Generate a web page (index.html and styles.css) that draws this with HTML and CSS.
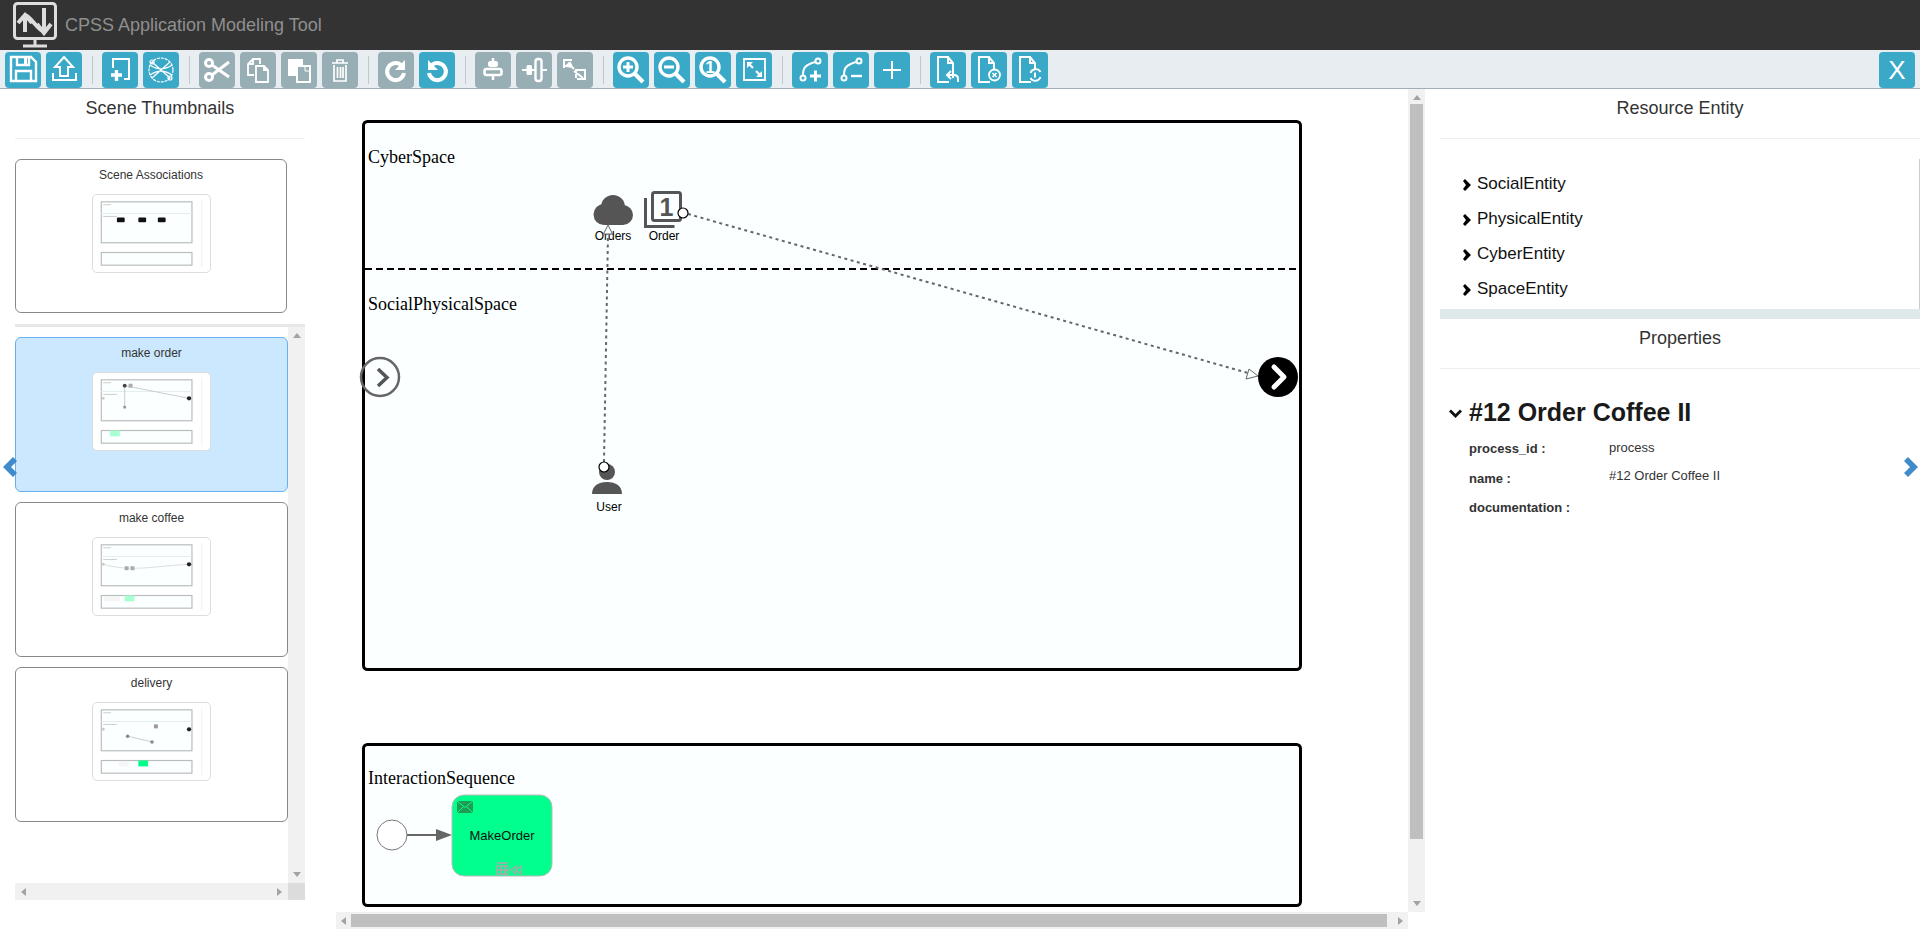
FILE: index.html
```html
<!DOCTYPE html>
<html lang="en">
<head>
  <meta charset="UTF-8">
  <title>CPSS Application Modeling Tool</title>
  <link rel="stylesheet" href="styles.css">
</head>
<body>
  <svg class="defs" width="0" height="0">
    <symbol id="page" viewBox="0 0 36 36">
      <path d="M23 26V11l-5-6H8v25h11M18 5v6h5" fill="none" stroke="#fff" stroke-width="2"/>
    </symbol>
    <symbol id="mini" viewBox="0 0 119 79">
      <rect x="8" y="7" width="93" height="42" fill="#fbffff" stroke="#b8bcbc" stroke-width="1.200"/>
      <line x1="8" y1="19" x2="101" y2="19" stroke="#e4eeee"/>
      <rect x="8" y="59" width="93" height="13" fill="#fbffff" stroke="#b8bcbc" stroke-width="1.200"/>
      <line x1="111" y1="5" x2="111" y2="74" stroke="#f2f2f2"/>
      <line x1="10" y1="10" x2="18" y2="10" stroke="#ccc"/>
      <line x1="10" y1="22" x2="24" y2="22" stroke="#ccc"/>
    </symbol>
  </svg>

  <header class="topbar">
    <svg class="logo" width="46" height="46" viewBox="0 0 46 46">
      <rect x="1.500" y="1.500" width="41" height="35" rx="3" fill="none" stroke="#ddd" stroke-width="3"/>
      <path d="M22 36v8M10 44h24" fill="none" stroke="#ddd" stroke-width="3"/>
      <path d="M12 30V13M5 21l7-8 7 8M12 13c6 2 12 14 19 17M31 30V6M24 22l7 9 7-9" fill="none" stroke="#ddd" stroke-width="4"/>
    </svg>
    <span class="app-title">CPSS Application Modeling Tool</span>
  </header>

  <nav class="toolbar">
    <button class="tool"><svg viewBox="0 0 36 36"><path d="M6 5h20l5 5v19H6zM12 5v8h12V5M11 29V19h15v10" fill="none" stroke="#fff" stroke-width="2.400"/><rect x="19" y="6" width="3" height="6" fill="#fff"/></svg></button>
    <button class="tool"><svg viewBox="0 0 36 36"><path d="M18 5l9 10h-5v9h-8v-9H9zM7 21v7h23v-7" fill="none" stroke="#fff" stroke-width="2"/></svg></button>
    <i class="sep"></i>
    <button class="tool"><svg viewBox="0 0 36 36"><path d="M11 16V7h16v20h-5" fill="none" stroke="#fff" stroke-width="2"/><path d="M9 23h11M14.500 18v11" stroke="#fff" stroke-width="3.400"/></svg></button>
    <button class="tool"><svg viewBox="0 0 36 36"><g fill="none" stroke="#fff" stroke-width="1.200"><circle cx="18" cy="18" r="12" stroke-dasharray="3 1"/><path d="M7 13c7 5 15 5 22 0M7 23c7-5 15-5 22 0M9 10l18 16M27 10L9 26"/><circle cx="9" cy="10" r="2"/><circle cx="27" cy="26" r="2"/></g></svg></button>
    <i class="sep"></i>
    <button class="tool off"><svg viewBox="0 0 36 36"><g fill="none" stroke="#fff" stroke-width="3"><circle cx="10" cy="11" r="3.500"/><circle cx="10" cy="25" r="3.500"/><path d="M13 13l17 12M13 23l17-13"/></g></svg></button>
    <button class="tool off"><svg viewBox="0 0 36 36"><path d="M14 23H8V12l5-5h7v5M13 7v5H8M16 14h8l4 4v12H16zM24 14v4h4" fill="none" stroke="#fff" stroke-width="1.800"/></svg></button>
    <button class="tool off"><svg viewBox="0 0 36 36"><path d="M7 7h15v17H7z" fill="#fff"/><rect x="16" y="14" width="13" height="16" fill="#98aeb5" stroke="#fff" stroke-width="2"/><path d="M24 15v4h4" fill="none" stroke="#fff"/></svg></button>
    <button class="tool off"><svg viewBox="0 0 36 36"><path d="M10 11h16M15 11V8h6v3M12 13v16h12V13M15.500 15v11M18.500 15v11M21 15v11" fill="none" stroke="#fff" stroke-width="1.700"/></svg></button>
    <i class="sep"></i>
    <button class="tool off"><svg viewBox="0 0 36 36"><path d="M26 21a8.500 8.500 0 1 1-3-8" fill="none" stroke="#fff" stroke-width="4"/><path d="M27 8v10H17z" fill="#fff"/></svg></button>
    <button class="tool"><svg viewBox="0 0 36 36"><path d="M10 21a8.500 8.500 0 1 0 3-8" fill="none" stroke="#fff" stroke-width="4"/><path d="M9 8v10h10z" fill="#fff"/></svg></button>
    <i class="sep"></i>
    <button class="tool off"><svg viewBox="0 0 36 36"><path d="M18 6v5M18 23v5" stroke="#fff" stroke-width="2.500"/><rect x="13.500" y="9.500" width="9" height="5" rx="1.500" fill="#fff" stroke="#fff"/><rect x="9.500" y="17" width="17" height="6" rx="2" fill="none" stroke="#fff" stroke-width="2.600"/></svg></button>
    <button class="tool off"><svg viewBox="0 0 36 36"><path d="M6 18h5M16 18h3M26 18h5" stroke="#fff" stroke-width="2"/><rect x="10.500" y="13" width="5.500" height="10" rx="1.500" fill="#fff"/><rect x="19.500" y="7" width="6" height="22" rx="2.500" fill="none" stroke="#fff" stroke-width="2.400"/></svg></button>
    <button class="tool off"><svg viewBox="0 0 36 36"><path d="M15 8H7v8M19 26v-8h9v9h-8M13 11l2 4-6-1zM17 19l9 7M11 11l6 6" fill="none" stroke="#fff" stroke-width="2"/></svg></button>
    <i class="sep"></i>
    <button class="tool"><svg viewBox="0 0 36 36"><circle cx="15" cy="15" r="9" fill="none" stroke="#fff" stroke-width="3.400"/><path d="M22 22l8 8" stroke="#fff" stroke-width="4.200"/><path d="M10 15h10M15 10v10" stroke="#fff" stroke-width="3"/></svg></button>
    <button class="tool"><svg viewBox="0 0 36 36"><circle cx="15" cy="15" r="9" fill="none" stroke="#fff" stroke-width="3.400"/><path d="M22 22l8 8" stroke="#fff" stroke-width="4.200"/><path d="M10 15h10" stroke="#fff" stroke-width="3"/></svg></button>
    <button class="tool"><svg viewBox="0 0 36 36"><circle cx="15" cy="15" r="9" fill="none" stroke="#fff" stroke-width="3.400"/><path d="M22 22l8 8" stroke="#fff" stroke-width="4.200"/><text class="tool-digit" x="15" y="21">1</text></svg></button>
    <button class="tool"><svg viewBox="0 0 36 36"><path d="M8 7h21v21H8z" fill="none" stroke="#fff" stroke-width="1.800"/><path d="M12 11l5 5M25 24l-5-5" stroke="#fff" stroke-width="2.200"/><path d="M11 10h6l-6 6zM26 25h-6l6-6z" fill="#fff"/></svg></button>
    <i class="sep"></i>
    <button class="tool"><svg viewBox="0 0 36 36"><g fill="none" stroke="#fff" stroke-width="2"><circle cx="11" cy="26" r="2.500"/><circle cx="26" cy="9" r="2.500"/><path d="M11 23c0-7 2-10 12-13"/></g><path d="M18 24h11M23.500 18.500v11" stroke="#fff" stroke-width="3"/></svg></button>
    <button class="tool"><svg viewBox="0 0 36 36"><g fill="none" stroke="#fff" stroke-width="2"><circle cx="11" cy="26" r="2.500"/><circle cx="26" cy="9" r="2.500"/><path d="M11 23c0-7 2-10 12-13"/></g><path d="M18 24h11" stroke="#fff" stroke-width="2.400"/></svg></button>
    <button class="tool"><svg viewBox="0 0 36 36"><path d="M9 18h18M18 9v18" stroke="#fff" stroke-width="2"/></svg></button>
    <i class="sep"></i>
    <button class="tool"><svg viewBox="0 0 36 36"><use href="#page"/><path d="M28 30v-3c0-3-2-4-4-4h-6M21 19l-4 4 4 4" fill="none" stroke="#fff" stroke-width="2"/></svg></button>
    <button class="tool"><svg viewBox="0 0 36 36"><use href="#page"/><circle cx="23.500" cy="23" r="5.500" fill="#3aa9c8" stroke="#fff" stroke-width="1.800"/><path d="M21.500 21l4 4M25.500 21l-4 4" stroke="#fff" stroke-width="1.600"/></svg></button>
    <button class="tool"><svg viewBox="0 0 36 36"><use href="#page"/><path d="M18.500 21a5.500 5.500 0 0 1 10-1M28.500 25a5.500 5.500 0 0 1-10 1" fill="#3aa9c8" stroke="#fff" stroke-width="1.800"/></svg></button>
    <button class="tool close">X</button>
  </nav>

  <main class="workspace">
    <aside class="scenes">
      <h2 class="panel-title">Scene Thumbnails</h2>
      <div class="pinned">
        <article class="card pinned-card">
          <h3>Scene Associations</h3>
          <svg class="thumb" viewBox="0 0 119 79"><use href="#mini"/><g class="mini-art" fill="#111"><rect x="24" y="23" width="8" height="5" rx="1"/><rect x="46" y="23" width="8" height="5" rx="1"/><rect x="66" y="23" width="8" height="5" rx="1"/></g></svg>
        </article>
      </div>
      <div class="scene-scroll">
        <div class="scene-list">
          <article class="card active">
            <h3>make order</h3>
            <svg class="thumb" viewBox="0 0 119 79"><use href="#mini"/><g class="mini-art"><path d="M32 13l66 13M32 13v22" stroke="#ccc" fill="none"/><circle cx="32" cy="13" r="2" fill="#444"/><rect x="36" y="11" width="4" height="4" fill="#aaa"/><circle cx="98" cy="26" r="2.200" fill="#222"/><circle cx="32" cy="35" r="1.600" fill="#999"/><circle cx="10" cy="26" r="1.500" fill="#ccc"/><rect x="17" y="59" width="10" height="6" fill="#a8ffcf"/></g></svg>
          </article>
          <article class="card">
            <h3>make coffee</h3>
            <svg class="thumb" viewBox="0 0 119 79"><use href="#mini"/><g class="mini-art"><path d="M10 27c30 8 50 2 88 0" stroke="#ddd" fill="none"/><rect x="32" y="29" width="4" height="4" fill="#aaa"/><rect x="38" y="29" width="4" height="4" fill="#aaa"/><circle cx="98" cy="27" r="2.200" fill="#222"/><circle cx="10" cy="27" r="1.500" fill="#ccc"/><rect x="32" y="59" width="10" height="6" fill="#a8ffcf"/><rect x="11" y="60" width="16" height="5" fill="#f5f5f5"/></g></svg>
          </article>
          <article class="card">
            <h3>delivery</h3>
            <svg class="thumb" viewBox="0 0 119 79"><use href="#mini"/><g class="mini-art"><path d="M35 34l25 6" stroke="#ccc"/><rect x="62" y="22" width="4" height="4" fill="#999"/><circle cx="35" cy="34" r="1.800" fill="#888"/><circle cx="60" cy="40" r="1.800" fill="#888"/><circle cx="98" cy="27" r="2.200" fill="#222"/><circle cx="10" cy="27" r="1.500" fill="#ccc"/><rect x="46" y="59" width="10" height="6" fill="#00ff88"/><rect x="26" y="60" width="10" height="5" fill="#f5f5f5"/></g></svg>
          </article>
        </div>
        <div class="vbar"><span class="tri up"></span><span class="tri down"></span></div>
        <div class="hbar"><span class="tri left"></span><span class="tri right"></span></div>
        <div class="bar-corner"></div>
      </div>
    </aside>

    <section class="canvas-wrap">
      <svg class="canvas" viewBox="336 89 1072 823" width="1072" height="823">
        <rect x="363.500" y="121.500" width="937" height="548" rx="4" class="pool"/>
        <line x1="365" y1="269" x2="1299" y2="269" class="divider"/>
        <text class="lane-label" x="368" y="163">CyberSpace</text>
        <text class="lane-label" x="368" y="310">SocialPhysicalSpace</text>

        <!-- cloud -->
        <g class="shape">
          <circle cx="604" cy="214.500" r="10.500"/>
          <circle cx="623" cy="215" r="10"/>
          <circle cx="613" cy="207" r="12"/>
          <rect x="604" y="210" width="19" height="15"/>
        </g>
        <text class="node-label" x="613" y="240">Orders</text>

        <!-- order collection -->
        <path d="M645.500 198v28.500h29" class="outline"/>
        <rect x="652.500" y="192.500" width="28" height="28" rx="2" class="outline"/>
        <text class="order-digit" x="666.500" y="216">1</text>
        <text class="node-label" x="664" y="240">Order</text>

        <!-- user -->
        <circle cx="607" cy="472" r="8" class="shape"/>
        <path d="M592 494c0-8 6-12 15-12s15 4 15 12z" class="shape"/>
        <text class="node-label" x="609" y="511">User</text>

        <!-- associations -->
        <path d="M604 462L608 234" class="dotted"/>
        <path d="M608 225l-4.500 9h9z" class="arrow-open"/>
        <circle cx="604" cy="467" r="5" class="port"/>
        <path d="M688 214L1248 373" class="dotted"/>
        <path d="M1258 376l-9-7-3 10z" class="arrow-open"/>
        <circle cx="683" cy="213" r="5" class="port"/>

        <!-- start and end events -->
        <circle cx="380" cy="377" r="19" class="start-scene"/>
        <path d="M378 369l9 8.500-9 8.500" class="start-chevron"/>
        <circle cx="1278" cy="377" r="20" fill="#000"/>
        <path d="M1274 367l10 10-10 10" class="end-chevron"/>

        <rect x="363.500" y="744.500" width="937" height="161" rx="4" class="pool"/>
        <text class="lane-label" x="368" y="784">InteractionSequence</text>
        <circle cx="392" cy="835" r="15" class="seq-start"/>
        <line x1="407" y1="835" x2="438" y2="835" class="flow"/>
        <path d="M452 835l-16 6v-12z" fill="#666"/>
        <rect x="452" y="795" width="100" height="81" rx="12" class="task"/>
        <rect x="457" y="801" width="16" height="12" fill="#1f9d55"/>
        <path d="M457 801l8 6.500 8-6.500M457 813l6-6M473 813l-6-6" fill="none" stroke="#00ff8c" stroke-width="1"/>
        <text class="task-label" x="502" y="840">MakeOrder</text>
        <path d="M497 863h11M497 866h11v8h-11zM501 866v8M505 866v8M497 870h11" fill="none" stroke="#aaa" stroke-width="1.500"/>
        <path d="M516 866l-5 4 5 4zM521 866l-5 4 5 4z" fill="none" stroke="#aaa" stroke-width="1.200"/>
      </svg>
      <div class="vbar big"><span class="tri up"></span><span class="thumb-v"></span><span class="tri down"></span></div>
      <div class="hbar big"><span class="tri left"></span><span class="thumb-h"></span><span class="tri right"></span></div>
    </section>

    <aside class="details">
      <h2 class="panel-title">Resource Entity</h2>
      <div class="tree">
        <ul class="tree-list">
          <li><svg class="chev" viewBox="0 0 8 12"><path d="M0 2l2-2 6 6-6 6-2-2 3-4z"/></svg>SocialEntity</li>
          <li><svg class="chev" viewBox="0 0 8 12"><path d="M0 2l2-2 6 6-6 6-2-2 3-4z"/></svg>PhysicalEntity</li>
          <li><svg class="chev" viewBox="0 0 8 12"><path d="M0 2l2-2 6 6-6 6-2-2 3-4z"/></svg>CyberEntity</li>
          <li><svg class="chev" viewBox="0 0 8 12"><path d="M0 2l2-2 6 6-6 6-2-2 3-4z"/></svg>SpaceEntity</li>
        </ul>
      </div>
      <div class="band"></div>
      <h2 class="panel-title">Properties</h2>
      <div class="props">
        <h1 class="process-name"><svg class="chev-down" viewBox="0 0 13 9"><path d="M0 2.500l2-2 4.500 4.500L11 .5l2 2L6.500 9z"/></svg>#12 Order Coffee II</h1>
        <div class="prop-cols">
          <div class="prop-labels">
            <div>process_id :</div>
            <div>name :</div>
            <div>documentation :</div>
          </div>
          <div class="prop-values">
            <div>process</div>
            <div>#12 Order Coffee II</div>
          </div>
        </div>
      </div>
    </aside>

    <svg class="collapse collapse-left" viewBox="0 0 14 20"><path d="M14 4l-4-4L0 10l10 10 4-4-6-6z"/></svg>
    <svg class="collapse collapse-right" viewBox="0 0 14 20"><path d="M0 4l4-4 10 10-10 10-4-4 6-6z"/></svg>
  </main>
</body>
</html>
```

FILE: styles.css
```css
* {
  box-sizing: border-box;
}
html, body {
  margin: 0;
  height: 929px;
  overflow: hidden;
}
body {
  font-family: "Liberation Sans", Arial, sans-serif;
  color: #333;
  background: #fff;
}
.defs {
  display: block;
  height: 0;
}
.topbar {
  display: flex;
  align-items: center;
  height: 50px;
  padding-left: 13px;
  background: #333;
}
.logo {
  flex: none;
  width: 46px;
  height: 46px;
}
.app-title {
  margin-left: 6px;
  font-size: 18px;
  color: #8f8f8f;
}
.toolbar {
  display: flex;
  align-items: flex-end;
  gap: 5px;
  height: 39px;
  padding: 0 5px;
  background: #e8edf1;
  border-bottom: 1px solid #a4abba;
}
.tool {
  flex: none;
  width: 36px;
  height: 36px;
  padding: 0;
  border: none;
  border-radius: 4px;
  background: #3aa9c8;
}
.tool svg {
  display: block;
  width: 36px;
  height: 36px;
}
.tool.off {
  background: #98aeb5;
}
.tool-digit {
  font-size: 17px;
  font-weight: bold;
  fill: #fff;
  text-anchor: middle;
}
.close {
  margin-left: auto;
  color: #fff;
  font-family: "Liberation Sans", Arial, sans-serif;
  font-size: 26px;
  line-height: 36px;
}
.sep {
  flex: none;
  width: 1px;
  height: 28px;
  margin: 0 4px 4px 5px;
  background: #c2c8cc;
}
.workspace {
  position: relative;
  display: flex;
  height: 840px;
}
.panel-title {
  margin: 0;
  height: 50px;
  padding-top: 9px;
  font-size: 18px;
  font-weight: normal;
  line-height: 20px;
  text-align: center;
  border-bottom: 1px solid #eee;
}

/* left column */
.scenes {
  flex: none;
  width: 290px;
  margin-left: 15px;
}
.pinned {
  padding-top: 20px;
  height: 188px;
  border-bottom: 3px solid #e8e8e8;
}
.card {
  height: 155px;
  padding-top: 7px;
  border: 1px solid #888;
  border-radius: 6px;
  background: #fff;
  text-align: center;
}
.card h3 {
  margin: 0 0 11px;
  font-size: 12px;
  font-weight: normal;
  line-height: 16px;
}
.pinned-card {
  width: 272px;
  height: 154px;
}
.card.active {
  background: #cce8ff;
  border-color: #66b0f0;
}
.thumb {
  display: block;
  width: 119px;
  height: 79px;
  margin: 0 auto;
  background: #fff;
  border: 1px solid #ddd;
  border-radius: 5px;
}
.thumb use {
  filter: blur(.4px);
}
.mini-art {
  filter: blur(.5px);
}
.scene-scroll {
  display: grid;
  grid-template-columns: 273px 17px;
  grid-template-rows: 556px 17px;
  width: 290px;
}
.scene-list {
  display: flex;
  flex-direction: column;
  gap: 10px;
  padding-top: 10px;
}
.vbar {
  position: relative;
  display: flex;
  flex-direction: column;
  align-items: center;
  justify-content: space-between;
  padding: 6px 0;
  background: #f1f1f1;
}
.hbar {
  display: flex;
  align-items: center;
  justify-content: space-between;
  padding: 0 6px;
  background: #f1f1f1;
}
.bar-corner {
  background: #dcdcdc;
}
.tri {
  flex: none;
  width: 0;
  height: 0;
  border: 4px solid transparent;
}
.tri.up {
  border-top: 0;
  border-bottom: 5px solid #a3a3a3;
}
.tri.down {
  border-bottom: 0;
  border-top: 5px solid #a3a3a3;
}
.tri.left {
  border-left: 0;
  border-right: 5px solid #a3a3a3;
}
.tri.right {
  border-right: 0;
  border-left: 5px solid #a3a3a3;
}

/* drawing area */
.canvas-wrap {
  flex: none;
  display: grid;
  grid-template-columns: 1072px 17px;
  grid-template-rows: 823px 17px;
  width: 1089px;
  margin-left: 31px;
}
.canvas {
  display: block;
}
.vbar.big {
  gap: 4px;
  padding: 6px 2px;
}
.thumb-v {
  flex: none;
  align-self: stretch;
  height: 735px;
  margin-bottom: auto;
  background: #bfbfbf;
}
.thumb-h {
  flex: none;
  align-self: stretch;
  width: 1036px;
  margin: 2px auto 2px 5px;
  background: #bfbfbf;
}
.hbar.big {
  padding: 0 5px;
}
.pool {
  fill: #fbffff;
  stroke: #000;
  stroke-width: 3;
}
.divider {
  stroke: #000;
  stroke-width: 2;
  stroke-dasharray: 7 4;
}
.lane-label {
  font-family: "Liberation Serif", "Times New Roman", serif;
  font-size: 18px;
  fill: #000;
}
.node-label {
  font-size: 12px;
  fill: #000;
  text-anchor: middle;
}
.shape {
  fill: #555;
}
.outline {
  fill: none;
  stroke: #555;
  stroke-width: 3;
}
.order-digit {
  font-size: 25px;
  font-weight: bold;
  fill: #555;
  text-anchor: middle;
}
.dotted {
  fill: none;
  stroke: #666;
  stroke-width: 2;
  stroke-dasharray: 3 3.500;
}
.arrow-open {
  fill: #fbffff;
  stroke: #666;
  stroke-width: 1;
}
.port {
  fill: #fff;
  stroke: #000;
  stroke-width: 1.200;
}
.start-scene {
  fill: none;
  stroke: #666;
  stroke-width: 2.500;
}
.start-chevron {
  fill: none;
  stroke: #555;
  stroke-width: 3.500;
}
.end-chevron {
  fill: none;
  stroke: #fff;
  stroke-width: 5;
  stroke-linecap: round;
  stroke-linejoin: round;
}
.seq-start {
  fill: #fff;
  stroke: #777;
  stroke-width: 1;
}
.flow {
  stroke: #666;
  stroke-width: 2;
}
.task {
  fill: #00ff8c;
  stroke: #bbb;
  stroke-width: 1;
}
.task-label {
  font-size: 13px;
  fill: #111;
  text-anchor: middle;
}

/* right column */
.details {
  flex: none;
  width: 480px;
  margin-left: 15px;
}
.tree {
  padding-top: 20px;
  height: 170px;
}
.tree-list {
  height: 150px;
  margin: 0;
  padding: 7px 0 0 23px;
  list-style: none;
  border-right: 1px solid #ccc;
}
.tree-list li {
  display: flex;
  align-items: center;
  height: 35px;
  font-size: 17px;
  color: #111;
}
.chev {
  width: 8px;
  height: 12px;
  margin: 2px 6px 0 0;
  fill: #000;
}
.band {
  height: 10px;
  background: #dfe8ea;
}
.props {
  padding: 29px 0 0 9px;
}
.process-name {
  display: flex;
  align-items: center;
  margin: 0;
  font-size: 25px;
  line-height: 28px;
  color: #1a1a1a;
}
.chev-down {
  width: 13px;
  height: 9px;
  margin: 2px 7px 0 0;
  fill: #111;
}
.prop-cols {
  display: flex;
  margin: 8px 0 0 20px;
}
.prop-labels {
  width: 140px;
  font-size: 13px;
  font-weight: bold;
  line-height: 29.500px;
}
.prop-values {
  font-size: 13px;
  line-height: 28px;
}
.collapse {
  position: absolute;
  top: 368px;
  width: 14px;
  height: 20px;
  fill: #428bca;
}
.collapse-left {
  left: 3px;
}
.collapse-right {
  left: 1904px;
}
```
